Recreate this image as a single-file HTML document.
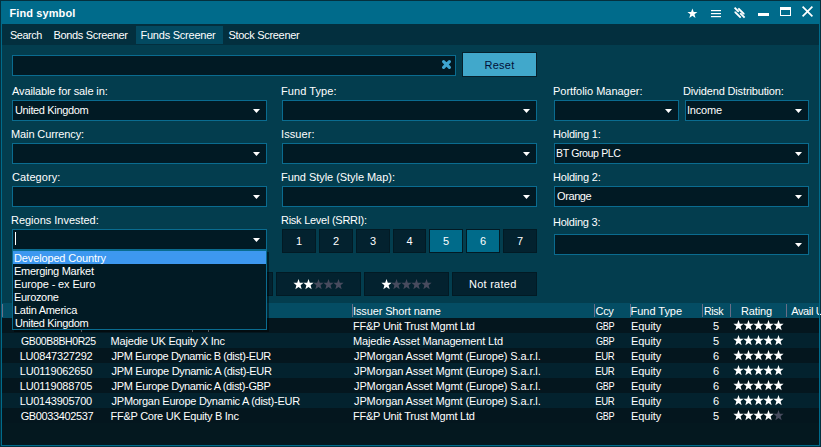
<!DOCTYPE html>
<html><head><meta charset="utf-8"><style>
html,body{margin:0;padding:0;width:821px;height:447px;overflow:hidden;background:#04303e}
body>div,body>svg{position:absolute;box-sizing:content-box}
.t{font-family:"Liberation Sans",sans-serif;font-size:11px;line-height:13px;color:#fff;white-space:pre}
.c{text-align:center}
</style></head><body>
<div style="left:0px;top:0px;width:821px;height:447px;background:#04303e;"></div>
<div style="left:1px;top:1px;width:819px;height:445px;background:#006b8b;"></div>
<div style="left:2px;top:24px;width:817px;height:421px;background:#033d4e;"></div>
<div class="t" style="left:9.50px;top:7px;letter-spacing:0.100px;font-weight:bold;">Find symbol</div>
<svg style="left:0;top:0" width="821" height="24">
<path d="M692.40,8.40 L693.69,11.88 L697.40,12.03 L694.49,14.34 L695.49,17.92 L692.40,15.86 L689.31,17.92 L690.31,14.34 L687.40,12.03 L691.11,11.88Z" fill="#fff"/>
<rect x="711" y="10" width="10" height="1.2" fill="#fff"/><rect x="711" y="13" width="10" height="1.2" fill="#fff"/><rect x="711" y="16" width="10" height="1.2" fill="#fff"/>
<g stroke="#fff" stroke-width="1.9" fill="none">
<path d="M734.6,7.6 L738.8,11.8"/><path d="M740.2,13.2 L744.6,17.6"/>
<path d="M738.3,8.3 L743.6,13.6 L743.6,14.4"/><path d="M735.4,11.6 L735.4,12.4 L740.7,17.7"/>
</g>
<rect x="758" y="13" width="11" height="3" fill="#fff"/>
<path d="M780,7 H791 V16 H780 Z M781,10 V15 H790 V10 Z" fill="#fff" fill-rule="evenodd"/>
<path d="M802.6,6.6 L812.4,16.4 M812.4,6.6 L802.6,16.4" stroke="#fff" stroke-width="1.7"/>
</svg>
<div style="left:2px;top:24px;width:817px;height:21px;background:#032f3e;"></div>
<div style="left:136px;top:26px;width:87px;height:18px;background:#034a61;"></div>
<div class="t" style="left:9.50px;top:29px;letter-spacing:-0.400px;transform:scaleX(0.9848);transform-origin:0px 0;">Search</div>
<div class="t" style="left:53.50px;top:29px;letter-spacing:-0.338px;">Bonds Screener</div>
<div class="t" style="left:140.50px;top:29px;letter-spacing:-0.231px;">Funds Screener</div>
<div class="t" style="left:228.50px;top:29px;letter-spacing:-0.308px;">Stock Screener</div>
<div style="left:12px;top:55px;width:442px;height:19px;background:#011a24;border:1px solid #0a6c90;"></div>
<svg style="left:441px;top:59px" width="11" height="11"><path d="M2.6,2.6 L8.4,8.4 M8.4,2.6 L2.6,8.4" stroke="#3ea5d0" stroke-width="3.2" stroke-linecap="round"/></svg>
<div style="left:462px;top:52px;width:73px;height:23px;background:#41a8cb;border:1px solid #06202b;"></div>
<div class="t" style="left:484.50px;top:59px;letter-spacing:0.250px;color:#021038">Reset</div>
<div class="t" style="left:12.00px;top:85px;letter-spacing:-0.119px;">Available for sale in:</div>
<div style="left:12px;top:100px;width:253px;height:19px;background:#011a24;border:1px solid #0a6c90;"></div>
<div class="t" style="left:15.00px;top:104px;letter-spacing:-0.362px;">United Kingdom</div>
<svg style="left:253px;top:109px" width="8" height="5"><polygon points="0,0 7,0 3.5,4" fill="#fff"/></svg>
<div class="t" style="left:281.00px;top:85px;letter-spacing:0.078px;">Fund Type:</div>
<div style="left:282px;top:100px;width:253px;height:19px;background:#011a24;border:1px solid #0a6c90;"></div>
<svg style="left:523px;top:109px" width="8" height="5"><polygon points="0,0 7,0 3.5,4" fill="#fff"/></svg>
<div class="t" style="left:553.00px;top:85px;letter-spacing:-0.024px;">Portfolio Manager:</div>
<div style="left:554px;top:100px;width:123px;height:19px;background:#011a24;border:1px solid #0a6c90;"></div>
<svg style="left:665px;top:109px" width="8" height="5"><polygon points="0,0 7,0 3.5,4" fill="#fff"/></svg>
<div class="t" style="left:683.00px;top:85px;letter-spacing:-0.148px;">Dividend Distribution:</div>
<div style="left:685px;top:100px;width:122px;height:19px;background:#011a24;border:1px solid #0a6c90;"></div>
<div class="t" style="left:687.00px;top:104px;letter-spacing:-0.200px;">Income</div>
<svg style="left:795px;top:109px" width="8" height="5"><polygon points="0,0 7,0 3.5,4" fill="#fff"/></svg>
<div class="t" style="left:11.00px;top:128px;letter-spacing:-0.108px;">Main Currency:</div>
<div style="left:12px;top:143px;width:253px;height:19px;background:#011a24;border:1px solid #0a6c90;"></div>
<svg style="left:253px;top:152px" width="8" height="5"><polygon points="0,0 7,0 3.5,4" fill="#fff"/></svg>
<div class="t" style="left:281.00px;top:128px;letter-spacing:0.100px;">Issuer:</div>
<div style="left:282px;top:143px;width:253px;height:19px;background:#011a24;border:1px solid #0a6c90;"></div>
<svg style="left:523px;top:152px" width="8" height="5"><polygon points="0,0 7,0 3.5,4" fill="#fff"/></svg>
<div class="t" style="left:553.00px;top:128px;letter-spacing:-0.189px;">Holding 1:</div>
<div style="left:554px;top:143px;width:253px;height:19px;background:#011a24;border:1px solid #0a6c90;"></div>
<div class="t" style="left:556.00px;top:147px;letter-spacing:-0.400px;transform:scaleX(0.9610);transform-origin:1px 0;">BT Group PLC</div>
<svg style="left:795px;top:152px" width="8" height="5"><polygon points="0,0 7,0 3.5,4" fill="#fff"/></svg>
<div class="t" style="left:12.00px;top:171px;letter-spacing:0.088px;">Category:</div>
<div style="left:12px;top:186px;width:253px;height:19px;background:#011a24;border:1px solid #0a6c90;"></div>
<svg style="left:253px;top:195px" width="8" height="5"><polygon points="0,0 7,0 3.5,4" fill="#fff"/></svg>
<div class="t" style="left:281.00px;top:171px;letter-spacing:-0.045px;">Fund Style (Style Map):</div>
<div style="left:282px;top:186px;width:253px;height:19px;background:#011a24;border:1px solid #0a6c90;"></div>
<svg style="left:523px;top:195px" width="8" height="5"><polygon points="0,0 7,0 3.5,4" fill="#fff"/></svg>
<div class="t" style="left:553.00px;top:171px;letter-spacing:-0.189px;">Holding 2:</div>
<div style="left:554px;top:186px;width:253px;height:19px;background:#011a24;border:1px solid #0a6c90;"></div>
<div class="t" style="left:557.00px;top:190px;letter-spacing:-0.400px;">Orange</div>
<svg style="left:795px;top:195px" width="8" height="5"><polygon points="0,0 7,0 3.5,4" fill="#fff"/></svg>
<div class="t" style="left:11.00px;top:214px;letter-spacing:-0.019px;">Regions Invested:</div>
<div style="left:12px;top:229px;width:253px;height:19px;background:#011a24;border:1px solid #0a6c90;"></div>
<svg style="left:253px;top:238px" width="8" height="5"><polygon points="0,0 7,0 3.5,4" fill="#fff"/></svg>
<div style="left:15px;top:232px;width:1px;height:13px;background:#fff"></div>
<div class="t" style="left:553.00px;top:216px;letter-spacing:-0.222px;">Holding 3:</div>
<div style="left:554px;top:234px;width:253px;height:19px;background:#011a24;border:1px solid #0a6c90;"></div>
<svg style="left:795px;top:243px" width="8" height="5"><polygon points="0,0 7,0 3.5,4" fill="#fff"/></svg>
<div class="t" style="left:281.00px;top:214px;letter-spacing:-0.259px;">Risk Level (SRRI):</div>
<div style="left:282px;top:229px;width:32px;height:22px;background:#03222f;border:1px solid #021a24;"></div>
<div class="t c" style="left:282px;top:235px;width:34px">1</div>
<div style="left:319px;top:229px;width:32px;height:22px;background:#03222f;border:1px solid #021a24;"></div>
<div class="t c" style="left:319px;top:235px;width:34px">2</div>
<div style="left:356px;top:229px;width:32px;height:22px;background:#03222f;border:1px solid #021a24;"></div>
<div class="t c" style="left:356px;top:235px;width:34px">3</div>
<div style="left:393px;top:229px;width:31px;height:22px;background:#03222f;border:1px solid #021a24;"></div>
<div class="t c" style="left:393px;top:235px;width:33px">4</div>
<div style="left:429px;top:229px;width:32px;height:22px;background:#006b8a;border:1px solid #021a24;"></div>
<div class="t c" style="left:429px;top:235px;width:34px">5</div>
<div style="left:466px;top:229px;width:32px;height:22px;background:#006b8a;border:1px solid #021a24;"></div>
<div class="t c" style="left:466px;top:235px;width:34px">6</div>
<div style="left:503px;top:229px;width:32px;height:22px;background:#03222f;border:1px solid #021a24;"></div>
<div class="t c" style="left:503px;top:235px;width:34px">7</div>
<div style="left:12px;top:272px;width:83px;height:22px;background:#03222f;border:1px solid #021a24;"></div>
<div style="left:100px;top:272px;width:83px;height:22px;background:#03222f;border:1px solid #021a24;"></div>
<div style="left:188px;top:272px;width:83px;height:22px;background:#03222f;border:1px solid #021a24;"></div>
<div style="left:276px;top:272px;width:83px;height:22px;background:#03222f;border:1px solid #021a24;"></div>
<div style="left:364px;top:272px;width:83px;height:22px;background:#03222f;border:1px solid #021a24;"></div>
<div style="left:452px;top:272px;width:83px;height:22px;background:#03222f;border:1px solid #021a24;"></div>
<svg style="left:29px;top:279px" width="52" height="12"><path transform="translate(0,0)" d="M5.50,-0.05 L6.81,3.70 L10.60,3.85 L7.62,6.33 L8.65,10.17 L5.50,7.95 L2.35,10.17 L3.38,6.33 L0.40,3.85 L4.19,3.70Z" fill="#ffffff"/><path transform="translate(10,0)" d="M5.50,-0.05 L6.81,3.70 L10.60,3.85 L7.62,6.33 L8.65,10.17 L5.50,7.95 L2.35,10.17 L3.38,6.33 L0.40,3.85 L4.19,3.70Z" fill="#ffffff"/><path transform="translate(20,0)" d="M5.50,-0.05 L6.81,3.70 L10.60,3.85 L7.62,6.33 L8.65,10.17 L5.50,7.95 L2.35,10.17 L3.38,6.33 L0.40,3.85 L4.19,3.70Z" fill="#ffffff"/><path transform="translate(30,0)" d="M5.50,-0.05 L6.81,3.70 L10.60,3.85 L7.62,6.33 L8.65,10.17 L5.50,7.95 L2.35,10.17 L3.38,6.33 L0.40,3.85 L4.19,3.70Z" fill="#ffffff"/><path transform="translate(40,0)" d="M5.50,-0.05 L6.81,3.70 L10.60,3.85 L7.62,6.33 L8.65,10.17 L5.50,7.95 L2.35,10.17 L3.38,6.33 L0.40,3.85 L4.19,3.70Z" fill="#ffffff"/></svg>
<svg style="left:117px;top:279px" width="52" height="12"><path transform="translate(0,0)" d="M5.50,-0.05 L6.81,3.70 L10.60,3.85 L7.62,6.33 L8.65,10.17 L5.50,7.95 L2.35,10.17 L3.38,6.33 L0.40,3.85 L4.19,3.70Z" fill="#ffffff"/><path transform="translate(10,0)" d="M5.50,-0.05 L6.81,3.70 L10.60,3.85 L7.62,6.33 L8.65,10.17 L5.50,7.95 L2.35,10.17 L3.38,6.33 L0.40,3.85 L4.19,3.70Z" fill="#ffffff"/><path transform="translate(20,0)" d="M5.50,-0.05 L6.81,3.70 L10.60,3.85 L7.62,6.33 L8.65,10.17 L5.50,7.95 L2.35,10.17 L3.38,6.33 L0.40,3.85 L4.19,3.70Z" fill="#ffffff"/><path transform="translate(30,0)" d="M5.50,-0.05 L6.81,3.70 L10.60,3.85 L7.62,6.33 L8.65,10.17 L5.50,7.95 L2.35,10.17 L3.38,6.33 L0.40,3.85 L4.19,3.70Z" fill="#ffffff"/><path transform="translate(40,0)" d="M5.50,-0.05 L6.81,3.70 L10.60,3.85 L7.62,6.33 L8.65,10.17 L5.50,7.95 L2.35,10.17 L3.38,6.33 L0.40,3.85 L4.19,3.70Z" fill="#474b5e"/></svg>
<svg style="left:205px;top:279px" width="52" height="12"><path transform="translate(0,0)" d="M5.50,-0.05 L6.81,3.70 L10.60,3.85 L7.62,6.33 L8.65,10.17 L5.50,7.95 L2.35,10.17 L3.38,6.33 L0.40,3.85 L4.19,3.70Z" fill="#ffffff"/><path transform="translate(10,0)" d="M5.50,-0.05 L6.81,3.70 L10.60,3.85 L7.62,6.33 L8.65,10.17 L5.50,7.95 L2.35,10.17 L3.38,6.33 L0.40,3.85 L4.19,3.70Z" fill="#ffffff"/><path transform="translate(20,0)" d="M5.50,-0.05 L6.81,3.70 L10.60,3.85 L7.62,6.33 L8.65,10.17 L5.50,7.95 L2.35,10.17 L3.38,6.33 L0.40,3.85 L4.19,3.70Z" fill="#ffffff"/><path transform="translate(30,0)" d="M5.50,-0.05 L6.81,3.70 L10.60,3.85 L7.62,6.33 L8.65,10.17 L5.50,7.95 L2.35,10.17 L3.38,6.33 L0.40,3.85 L4.19,3.70Z" fill="#474b5e"/><path transform="translate(40,0)" d="M5.50,-0.05 L6.81,3.70 L10.60,3.85 L7.62,6.33 L8.65,10.17 L5.50,7.95 L2.35,10.17 L3.38,6.33 L0.40,3.85 L4.19,3.70Z" fill="#474b5e"/></svg>
<svg style="left:293px;top:279px" width="52" height="12"><path transform="translate(0,0)" d="M5.50,-0.05 L6.81,3.70 L10.60,3.85 L7.62,6.33 L8.65,10.17 L5.50,7.95 L2.35,10.17 L3.38,6.33 L0.40,3.85 L4.19,3.70Z" fill="#ffffff"/><path transform="translate(10,0)" d="M5.50,-0.05 L6.81,3.70 L10.60,3.85 L7.62,6.33 L8.65,10.17 L5.50,7.95 L2.35,10.17 L3.38,6.33 L0.40,3.85 L4.19,3.70Z" fill="#ffffff"/><path transform="translate(20,0)" d="M5.50,-0.05 L6.81,3.70 L10.60,3.85 L7.62,6.33 L8.65,10.17 L5.50,7.95 L2.35,10.17 L3.38,6.33 L0.40,3.85 L4.19,3.70Z" fill="#474b5e"/><path transform="translate(30,0)" d="M5.50,-0.05 L6.81,3.70 L10.60,3.85 L7.62,6.33 L8.65,10.17 L5.50,7.95 L2.35,10.17 L3.38,6.33 L0.40,3.85 L4.19,3.70Z" fill="#474b5e"/><path transform="translate(40,0)" d="M5.50,-0.05 L6.81,3.70 L10.60,3.85 L7.62,6.33 L8.65,10.17 L5.50,7.95 L2.35,10.17 L3.38,6.33 L0.40,3.85 L4.19,3.70Z" fill="#474b5e"/></svg>
<svg style="left:381px;top:279px" width="52" height="12"><path transform="translate(0,0)" d="M5.50,-0.05 L6.81,3.70 L10.60,3.85 L7.62,6.33 L8.65,10.17 L5.50,7.95 L2.35,10.17 L3.38,6.33 L0.40,3.85 L4.19,3.70Z" fill="#ffffff"/><path transform="translate(10,0)" d="M5.50,-0.05 L6.81,3.70 L10.60,3.85 L7.62,6.33 L8.65,10.17 L5.50,7.95 L2.35,10.17 L3.38,6.33 L0.40,3.85 L4.19,3.70Z" fill="#474b5e"/><path transform="translate(20,0)" d="M5.50,-0.05 L6.81,3.70 L10.60,3.85 L7.62,6.33 L8.65,10.17 L5.50,7.95 L2.35,10.17 L3.38,6.33 L0.40,3.85 L4.19,3.70Z" fill="#474b5e"/><path transform="translate(30,0)" d="M5.50,-0.05 L6.81,3.70 L10.60,3.85 L7.62,6.33 L8.65,10.17 L5.50,7.95 L2.35,10.17 L3.38,6.33 L0.40,3.85 L4.19,3.70Z" fill="#474b5e"/><path transform="translate(40,0)" d="M5.50,-0.05 L6.81,3.70 L10.60,3.85 L7.62,6.33 L8.65,10.17 L5.50,7.95 L2.35,10.17 L3.38,6.33 L0.40,3.85 L4.19,3.70Z" fill="#474b5e"/></svg>
<div class="t" style="left:469.00px;top:278px;letter-spacing:0.250px;">Not rated</div>
<div style="left:2px;top:303px;width:817px;height:15px;background:#044d64;"></div>
<div style="left:2px;top:318px;width:817px;height:127px;background:#04181f;"></div>
<div style="left:2px;top:304px;width:1px;height:13px;background:#6a6e86;"></div>
<div style="left:352px;top:304px;width:1px;height:13px;background:#6a6e86;"></div>
<div style="left:594px;top:304px;width:1px;height:13px;background:#6a6e86;"></div>
<div style="left:630px;top:304px;width:1px;height:13px;background:#6a6e86;"></div>
<div style="left:702px;top:304px;width:1px;height:13px;background:#6a6e86;"></div>
<div style="left:730px;top:304px;width:1px;height:13px;background:#6a6e86;"></div>
<div style="left:786px;top:304px;width:1px;height:13px;background:#6a6e86;"></div>
<div class="t" style="left:353.00px;top:305px;letter-spacing:-0.125px;">Issuer Short name</div>
<div class="t" style="left:595.60px;top:305px;letter-spacing:-0.350px;">Ccy</div>
<div class="t" style="left:630.60px;top:305px;letter-spacing:-0.038px;">Fund Type</div>
<div class="t" style="left:704.40px;top:305px;letter-spacing:-0.400px;transform:scaleX(0.9646);transform-origin:1px 0;">Risk</div>
<div class="t" style="left:740.90px;top:305px;letter-spacing:-0.120px;">Rating</div>
<div class="t" style="left:791.20px;top:305px;letter-spacing:-0.367px;">Avail U</div>
<div style="left:2px;top:318px;width:817px;height:15px;background:#04161e;"></div>
<div style="left:81px;top:330px;width:1px;height:2px;background:#9aa6b0;"></div>
<div style="left:192px;top:330px;width:1px;height:2px;background:#9aa6b0;"></div>
<div style="left:208px;top:330px;width:1px;height:2px;background:#9aa6b0;"></div>
<div class="t" style="left:353.00px;top:320px;letter-spacing:-0.217px;">FF&amp;P Unit Trust Mgmt Ltd</div>
<div class="t" style="left:596.00px;top:320px;letter-spacing:-0.400px;transform:scaleX(0.8333);transform-origin:0px 0;">GBP</div>
<div class="t" style="left:631.00px;top:320px;letter-spacing:-0.060px;">Equity</div>
<div class="t" style="left:713.00px;top:320px;letter-spacing:0.000px;">5</div>
<svg style="left:733px;top:320px" width="52" height="12"><path transform="translate(0,0)" d="M5.50,-0.05 L6.81,3.70 L10.60,3.85 L7.62,6.33 L8.65,10.17 L5.50,7.95 L2.35,10.17 L3.38,6.33 L0.40,3.85 L4.19,3.70Z" fill="#ffffff"/><path transform="translate(10,0)" d="M5.50,-0.05 L6.81,3.70 L10.60,3.85 L7.62,6.33 L8.65,10.17 L5.50,7.95 L2.35,10.17 L3.38,6.33 L0.40,3.85 L4.19,3.70Z" fill="#ffffff"/><path transform="translate(20,0)" d="M5.50,-0.05 L6.81,3.70 L10.60,3.85 L7.62,6.33 L8.65,10.17 L5.50,7.95 L2.35,10.17 L3.38,6.33 L0.40,3.85 L4.19,3.70Z" fill="#ffffff"/><path transform="translate(30,0)" d="M5.50,-0.05 L6.81,3.70 L10.60,3.85 L7.62,6.33 L8.65,10.17 L5.50,7.95 L2.35,10.17 L3.38,6.33 L0.40,3.85 L4.19,3.70Z" fill="#ffffff"/><path transform="translate(40,0)" d="M5.50,-0.05 L6.81,3.70 L10.60,3.85 L7.62,6.33 L8.65,10.17 L5.50,7.95 L2.35,10.17 L3.38,6.33 L0.40,3.85 L4.19,3.70Z" fill="#ffffff"/></svg>
<div style="left:2px;top:333px;width:817px;height:15px;background:#03222e;"></div>
<div class="t" style="left:20.70px;top:335px;letter-spacing:-0.400px;transform:scaleX(0.9542);transform-origin:0px 0;">GB00B8BH0R25</div>
<div class="t" style="left:110.60px;top:335px;letter-spacing:-0.191px;">Majedie UK Equity X Inc</div>
<div class="t" style="left:353.00px;top:335px;letter-spacing:-0.148px;">Majedie Asset Management Ltd</div>
<div class="t" style="left:596.00px;top:335px;letter-spacing:-0.400px;transform:scaleX(0.8333);transform-origin:0px 0;">GBP</div>
<div class="t" style="left:631.00px;top:335px;letter-spacing:-0.060px;">Equity</div>
<div class="t" style="left:713.00px;top:335px;letter-spacing:0.000px;">5</div>
<svg style="left:733px;top:335px" width="52" height="12"><path transform="translate(0,0)" d="M5.50,-0.05 L6.81,3.70 L10.60,3.85 L7.62,6.33 L8.65,10.17 L5.50,7.95 L2.35,10.17 L3.38,6.33 L0.40,3.85 L4.19,3.70Z" fill="#ffffff"/><path transform="translate(10,0)" d="M5.50,-0.05 L6.81,3.70 L10.60,3.85 L7.62,6.33 L8.65,10.17 L5.50,7.95 L2.35,10.17 L3.38,6.33 L0.40,3.85 L4.19,3.70Z" fill="#ffffff"/><path transform="translate(20,0)" d="M5.50,-0.05 L6.81,3.70 L10.60,3.85 L7.62,6.33 L8.65,10.17 L5.50,7.95 L2.35,10.17 L3.38,6.33 L0.40,3.85 L4.19,3.70Z" fill="#ffffff"/><path transform="translate(30,0)" d="M5.50,-0.05 L6.81,3.70 L10.60,3.85 L7.62,6.33 L8.65,10.17 L5.50,7.95 L2.35,10.17 L3.38,6.33 L0.40,3.85 L4.19,3.70Z" fill="#ffffff"/><path transform="translate(40,0)" d="M5.50,-0.05 L6.81,3.70 L10.60,3.85 L7.62,6.33 L8.65,10.17 L5.50,7.95 L2.35,10.17 L3.38,6.33 L0.40,3.85 L4.19,3.70Z" fill="#ffffff"/></svg>
<div style="left:2px;top:348px;width:817px;height:15px;background:#04161e;"></div>
<div class="t" style="left:19.70px;top:350px;letter-spacing:-0.200px;">LU0847327292</div>
<div class="t" style="left:111.60px;top:350px;letter-spacing:-0.387px;">JPM Europe Dynamic B (dist)-EUR</div>
<div class="t" style="left:354.00px;top:350px;letter-spacing:-0.111px;">JPMorgan Asset Mgmt (Europe) S.a.r.l.</div>
<div class="t" style="left:595.00px;top:350px;letter-spacing:-0.400px;transform:scaleX(0.8726);transform-origin:1px 0;">EUR</div>
<div class="t" style="left:631.00px;top:350px;letter-spacing:-0.060px;">Equity</div>
<div class="t" style="left:713.00px;top:350px;letter-spacing:0.000px;">6</div>
<svg style="left:733px;top:350px" width="52" height="12"><path transform="translate(0,0)" d="M5.50,-0.05 L6.81,3.70 L10.60,3.85 L7.62,6.33 L8.65,10.17 L5.50,7.95 L2.35,10.17 L3.38,6.33 L0.40,3.85 L4.19,3.70Z" fill="#ffffff"/><path transform="translate(10,0)" d="M5.50,-0.05 L6.81,3.70 L10.60,3.85 L7.62,6.33 L8.65,10.17 L5.50,7.95 L2.35,10.17 L3.38,6.33 L0.40,3.85 L4.19,3.70Z" fill="#ffffff"/><path transform="translate(20,0)" d="M5.50,-0.05 L6.81,3.70 L10.60,3.85 L7.62,6.33 L8.65,10.17 L5.50,7.95 L2.35,10.17 L3.38,6.33 L0.40,3.85 L4.19,3.70Z" fill="#ffffff"/><path transform="translate(30,0)" d="M5.50,-0.05 L6.81,3.70 L10.60,3.85 L7.62,6.33 L8.65,10.17 L5.50,7.95 L2.35,10.17 L3.38,6.33 L0.40,3.85 L4.19,3.70Z" fill="#ffffff"/><path transform="translate(40,0)" d="M5.50,-0.05 L6.81,3.70 L10.60,3.85 L7.62,6.33 L8.65,10.17 L5.50,7.95 L2.35,10.17 L3.38,6.33 L0.40,3.85 L4.19,3.70Z" fill="#ffffff"/></svg>
<div style="left:2px;top:363px;width:817px;height:15px;background:#03222e;"></div>
<div class="t" style="left:19.70px;top:365px;letter-spacing:-0.164px;">LU0119062650</div>
<div class="t" style="left:111.60px;top:365px;letter-spacing:-0.320px;">JPM Europe Dynamic A (dist)-EUR</div>
<div class="t" style="left:354.00px;top:365px;letter-spacing:-0.111px;">JPMorgan Asset Mgmt (Europe) S.a.r.l.</div>
<div class="t" style="left:595.00px;top:365px;letter-spacing:-0.400px;transform:scaleX(0.8726);transform-origin:1px 0;">EUR</div>
<div class="t" style="left:631.00px;top:365px;letter-spacing:-0.060px;">Equity</div>
<div class="t" style="left:713.00px;top:365px;letter-spacing:0.000px;">6</div>
<svg style="left:733px;top:365px" width="52" height="12"><path transform="translate(0,0)" d="M5.50,-0.05 L6.81,3.70 L10.60,3.85 L7.62,6.33 L8.65,10.17 L5.50,7.95 L2.35,10.17 L3.38,6.33 L0.40,3.85 L4.19,3.70Z" fill="#ffffff"/><path transform="translate(10,0)" d="M5.50,-0.05 L6.81,3.70 L10.60,3.85 L7.62,6.33 L8.65,10.17 L5.50,7.95 L2.35,10.17 L3.38,6.33 L0.40,3.85 L4.19,3.70Z" fill="#ffffff"/><path transform="translate(20,0)" d="M5.50,-0.05 L6.81,3.70 L10.60,3.85 L7.62,6.33 L8.65,10.17 L5.50,7.95 L2.35,10.17 L3.38,6.33 L0.40,3.85 L4.19,3.70Z" fill="#ffffff"/><path transform="translate(30,0)" d="M5.50,-0.05 L6.81,3.70 L10.60,3.85 L7.62,6.33 L8.65,10.17 L5.50,7.95 L2.35,10.17 L3.38,6.33 L0.40,3.85 L4.19,3.70Z" fill="#ffffff"/><path transform="translate(40,0)" d="M5.50,-0.05 L6.81,3.70 L10.60,3.85 L7.62,6.33 L8.65,10.17 L5.50,7.95 L2.35,10.17 L3.38,6.33 L0.40,3.85 L4.19,3.70Z" fill="#ffffff"/></svg>
<div style="left:2px;top:378px;width:817px;height:15px;background:#04161e;"></div>
<div class="t" style="left:19.70px;top:380px;letter-spacing:-0.164px;">LU0119088705</div>
<div class="t" style="left:111.60px;top:380px;letter-spacing:-0.353px;">JPM Europe Dynamic A (dist)-GBP</div>
<div class="t" style="left:354.00px;top:380px;letter-spacing:-0.111px;">JPMorgan Asset Mgmt (Europe) S.a.r.l.</div>
<div class="t" style="left:596.00px;top:380px;letter-spacing:-0.400px;transform:scaleX(0.8333);transform-origin:0px 0;">GBP</div>
<div class="t" style="left:631.00px;top:380px;letter-spacing:-0.060px;">Equity</div>
<div class="t" style="left:713.00px;top:380px;letter-spacing:0.000px;">6</div>
<svg style="left:733px;top:380px" width="52" height="12"><path transform="translate(0,0)" d="M5.50,-0.05 L6.81,3.70 L10.60,3.85 L7.62,6.33 L8.65,10.17 L5.50,7.95 L2.35,10.17 L3.38,6.33 L0.40,3.85 L4.19,3.70Z" fill="#ffffff"/><path transform="translate(10,0)" d="M5.50,-0.05 L6.81,3.70 L10.60,3.85 L7.62,6.33 L8.65,10.17 L5.50,7.95 L2.35,10.17 L3.38,6.33 L0.40,3.85 L4.19,3.70Z" fill="#ffffff"/><path transform="translate(20,0)" d="M5.50,-0.05 L6.81,3.70 L10.60,3.85 L7.62,6.33 L8.65,10.17 L5.50,7.95 L2.35,10.17 L3.38,6.33 L0.40,3.85 L4.19,3.70Z" fill="#ffffff"/><path transform="translate(30,0)" d="M5.50,-0.05 L6.81,3.70 L10.60,3.85 L7.62,6.33 L8.65,10.17 L5.50,7.95 L2.35,10.17 L3.38,6.33 L0.40,3.85 L4.19,3.70Z" fill="#ffffff"/><path transform="translate(40,0)" d="M5.50,-0.05 L6.81,3.70 L10.60,3.85 L7.62,6.33 L8.65,10.17 L5.50,7.95 L2.35,10.17 L3.38,6.33 L0.40,3.85 L4.19,3.70Z" fill="#ffffff"/></svg>
<div style="left:2px;top:393px;width:817px;height:15px;background:#03222e;"></div>
<div class="t" style="left:19.70px;top:395px;letter-spacing:-0.255px;">LU0143905700</div>
<div class="t" style="left:111.60px;top:395px;letter-spacing:-0.274px;">JPMorgan Europe Dynamic A (dist)-EUR</div>
<div class="t" style="left:354.00px;top:395px;letter-spacing:-0.111px;">JPMorgan Asset Mgmt (Europe) S.a.r.l.</div>
<div class="t" style="left:595.00px;top:395px;letter-spacing:-0.400px;transform:scaleX(0.8726);transform-origin:1px 0;">EUR</div>
<div class="t" style="left:631.00px;top:395px;letter-spacing:-0.060px;">Equity</div>
<div class="t" style="left:713.00px;top:395px;letter-spacing:0.000px;">6</div>
<svg style="left:733px;top:395px" width="52" height="12"><path transform="translate(0,0)" d="M5.50,-0.05 L6.81,3.70 L10.60,3.85 L7.62,6.33 L8.65,10.17 L5.50,7.95 L2.35,10.17 L3.38,6.33 L0.40,3.85 L4.19,3.70Z" fill="#ffffff"/><path transform="translate(10,0)" d="M5.50,-0.05 L6.81,3.70 L10.60,3.85 L7.62,6.33 L8.65,10.17 L5.50,7.95 L2.35,10.17 L3.38,6.33 L0.40,3.85 L4.19,3.70Z" fill="#ffffff"/><path transform="translate(20,0)" d="M5.50,-0.05 L6.81,3.70 L10.60,3.85 L7.62,6.33 L8.65,10.17 L5.50,7.95 L2.35,10.17 L3.38,6.33 L0.40,3.85 L4.19,3.70Z" fill="#ffffff"/><path transform="translate(30,0)" d="M5.50,-0.05 L6.81,3.70 L10.60,3.85 L7.62,6.33 L8.65,10.17 L5.50,7.95 L2.35,10.17 L3.38,6.33 L0.40,3.85 L4.19,3.70Z" fill="#ffffff"/><path transform="translate(40,0)" d="M5.50,-0.05 L6.81,3.70 L10.60,3.85 L7.62,6.33 L8.65,10.17 L5.50,7.95 L2.35,10.17 L3.38,6.33 L0.40,3.85 L4.19,3.70Z" fill="#ffffff"/></svg>
<div style="left:2px;top:408px;width:817px;height:15px;background:#04161e;"></div>
<div class="t" style="left:20.70px;top:410px;letter-spacing:-0.373px;">GB0033402537</div>
<div class="t" style="left:110.60px;top:410px;letter-spacing:-0.275px;">FF&amp;P Core UK Equity B Inc</div>
<div class="t" style="left:353.00px;top:410px;letter-spacing:-0.217px;">FF&amp;P Unit Trust Mgmt Ltd</div>
<div class="t" style="left:596.00px;top:410px;letter-spacing:-0.400px;transform:scaleX(0.8333);transform-origin:0px 0;">GBP</div>
<div class="t" style="left:631.00px;top:410px;letter-spacing:-0.060px;">Equity</div>
<div class="t" style="left:713.00px;top:410px;letter-spacing:0.000px;">5</div>
<svg style="left:733px;top:410px" width="52" height="12"><path transform="translate(0,0)" d="M5.50,-0.05 L6.81,3.70 L10.60,3.85 L7.62,6.33 L8.65,10.17 L5.50,7.95 L2.35,10.17 L3.38,6.33 L0.40,3.85 L4.19,3.70Z" fill="#ffffff"/><path transform="translate(10,0)" d="M5.50,-0.05 L6.81,3.70 L10.60,3.85 L7.62,6.33 L8.65,10.17 L5.50,7.95 L2.35,10.17 L3.38,6.33 L0.40,3.85 L4.19,3.70Z" fill="#ffffff"/><path transform="translate(20,0)" d="M5.50,-0.05 L6.81,3.70 L10.60,3.85 L7.62,6.33 L8.65,10.17 L5.50,7.95 L2.35,10.17 L3.38,6.33 L0.40,3.85 L4.19,3.70Z" fill="#ffffff"/><path transform="translate(30,0)" d="M5.50,-0.05 L6.81,3.70 L10.60,3.85 L7.62,6.33 L8.65,10.17 L5.50,7.95 L2.35,10.17 L3.38,6.33 L0.40,3.85 L4.19,3.70Z" fill="#ffffff"/><path transform="translate(40,0)" d="M5.50,-0.05 L6.81,3.70 L10.60,3.85 L7.62,6.33 L8.65,10.17 L5.50,7.95 L2.35,10.17 L3.38,6.33 L0.40,3.85 L4.19,3.70Z" fill="#474b5e"/></svg>
<div style="left:819px;top:24px;width:1px;height:421px;background:#006b8b;"></div>
<div style="left:14px;top:252px;width:255px;height:80px;background:rgba(0,0,0,0.45);"></div>
<div style="left:12px;top:250px;width:253px;height:78px;background:#011a24;border:1px solid #0a6c90;"></div>
<div style="left:13px;top:251px;width:253px;height:13px;background:#3d98f0;"></div>
<div class="t" style="left:14.00px;top:252px;letter-spacing:-0.138px;">Developed Country</div>
<div class="t" style="left:14.00px;top:265px;letter-spacing:-0.271px;">Emerging Market</div>
<div class="t" style="left:14.00px;top:278px;letter-spacing:-0.127px;">Europe - ex Euro</div>
<div class="t" style="left:14.00px;top:291px;letter-spacing:-0.329px;">Eurozone</div>
<div class="t" style="left:14.00px;top:304px;letter-spacing:-0.275px;">Latin America</div>
<div class="t" style="left:15.00px;top:317px;letter-spacing:-0.362px;">United Kingdom</div>
</body></html>
